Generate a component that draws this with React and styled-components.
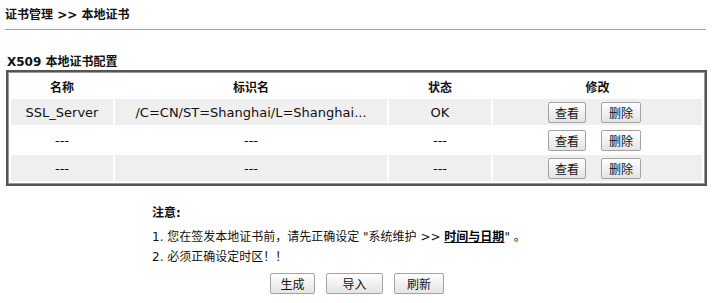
import styled, { createGlobalStyle } from "styled-components";

const GlobalStyle = createGlobalStyle`
  html, body {
    margin: 0;
    padding: 0;
    background: #fff;
  }
  body {
    font-family: "DejaVu Sans", "Noto Sans CJK SC", sans-serif;
    font-size: 12px;
    color: #111;
  }
`;

const Page = styled.div`
  width: 714px;
  height: 303px;
  overflow: hidden;
  padding-top: 8px;
  box-sizing: border-box;
`;

const PageTitle = styled.div`
  font-weight: bold;
  padding-left: 5px;
  height: 14px;
  line-height: 14px;
`;

const Divider = styled.div`
  height: 1px;
  background: #a0a0a0;
  margin: 7px 8px 0 5px;
`;

const SectionTitle = styled.div`
  font-weight: bold;
  padding-left: 7px;
  margin-top: 24px;
  height: 16px;
  line-height: 16px;
`;

const Box = styled.div`
  margin: 0 7px 0 6px;
  border: 2px solid #555;
  box-shadow: inset 0 0 0 1px #9a9a9a;
  padding: 1px;
`;

const Table = styled.table`
  width: 100%;
  border-spacing: 2px;
  table-layout: fixed;
`;

const HeadCell = styled.th`
  font-weight: bold;
  height: 22px;
  padding: 0;
  text-align: center;
  vertical-align: middle;
  width: ${(p) => (p.$w ? `${p.$w}px` : "auto")};
`;

const Row = styled.tr`
  background: ${(p) => (p.$shaded ? "#efefef" : "#fff")};
`;

const Cell = styled.td`
  height: 26px;
  padding: 0;
  font-size: 13px;
  text-align: center;
  vertical-align: middle;
  white-space: nowrap;
  overflow: hidden;
`;

const ButtonGroup = styled.div`
  display: flex;
  justify-content: center;
  gap: ${(p) => p.$gap || 15}px;
  padding-right: ${(p) => p.$shift || 0}px;
`;

const Button = styled.button`
  font-family: inherit;
  font-size: 12px;
  color: #111;
  height: ${(p) => p.$h || 21}px;
  width: ${(p) => p.$w}px;
  padding: 0;
  border: 1px solid #a3a3a3;
  border-radius: 2px;
  background: linear-gradient(#fefefe, #e4e4e4);
  cursor: pointer;
`;

const Notes = styled.div`
  padding-left: 152px;
  margin-top: 17px;
`;

const NoteHead = styled.div`
  font-weight: bold;
  line-height: 20px;
  margin-bottom: 4px;
`;

const NoteLine = styled.div`
  line-height: 20px;
`;

const NoteLink = styled.a`
  font-weight: bold;
  color: #000;
  text-decoration: underline;
`;

const Footer = styled.div`
  margin-top: 6px;
  display: flex;
  justify-content: center;
  gap: 11px;
`;

const rows = [
  { name: "SSL_Server", subject: "/C=CN/ST=Shanghai/L=Shanghai...", status: "OK" },
  { name: "---", subject: "---", status: "---" },
  { name: "---", subject: "---", status: "---" },
];

export default function App() {
  return (
    <Page>
      <GlobalStyle />
      <PageTitle>证书管理 &gt;&gt; 本地证书</PageTitle>
      <Divider />
      <SectionTitle>X509 本地证书配置</SectionTitle>
      <Box>
        <Table>
          <thead>
            <tr>
              <HeadCell $w={102}>名称</HeadCell>
              <HeadCell $w={272}>标识名</HeadCell>
              <HeadCell $w={102}>状态</HeadCell>
              <HeadCell>修改</HeadCell>
            </tr>
          </thead>
          <tbody>
            {rows.map((r, i) => (
              <Row key={i} $shaded={i % 2 === 0}>
                <Cell>{r.name}</Cell>
                <Cell>{r.subject}</Cell>
                <Cell>{r.status}</Cell>
                <Cell>
                  <ButtonGroup $shift={6}>
                    <Button $w={38}>查看</Button>
                    <Button $w={40}>删除</Button>
                  </ButtonGroup>
                </Cell>
              </Row>
            ))}
          </tbody>
        </Table>
      </Box>
      <Notes>
        <NoteHead>注意:</NoteHead>
        <NoteLine>
          1. 您在签发本地证书前，请先正确设定 "系统维护 &gt;&gt;{" "}
          <NoteLink>时间与日期</NoteLink>" 。
        </NoteLine>
        <NoteLine>2. 必须正确设定时区！！</NoteLine>
      </Notes>
      <Footer>
        <Button $w={45} $h={21}>生成</Button>
        <Button $w={57} $h={21}>导入</Button>
        <Button $w={50} $h={21}>刷新</Button>
      </Footer>
    </Page>
  );
}
